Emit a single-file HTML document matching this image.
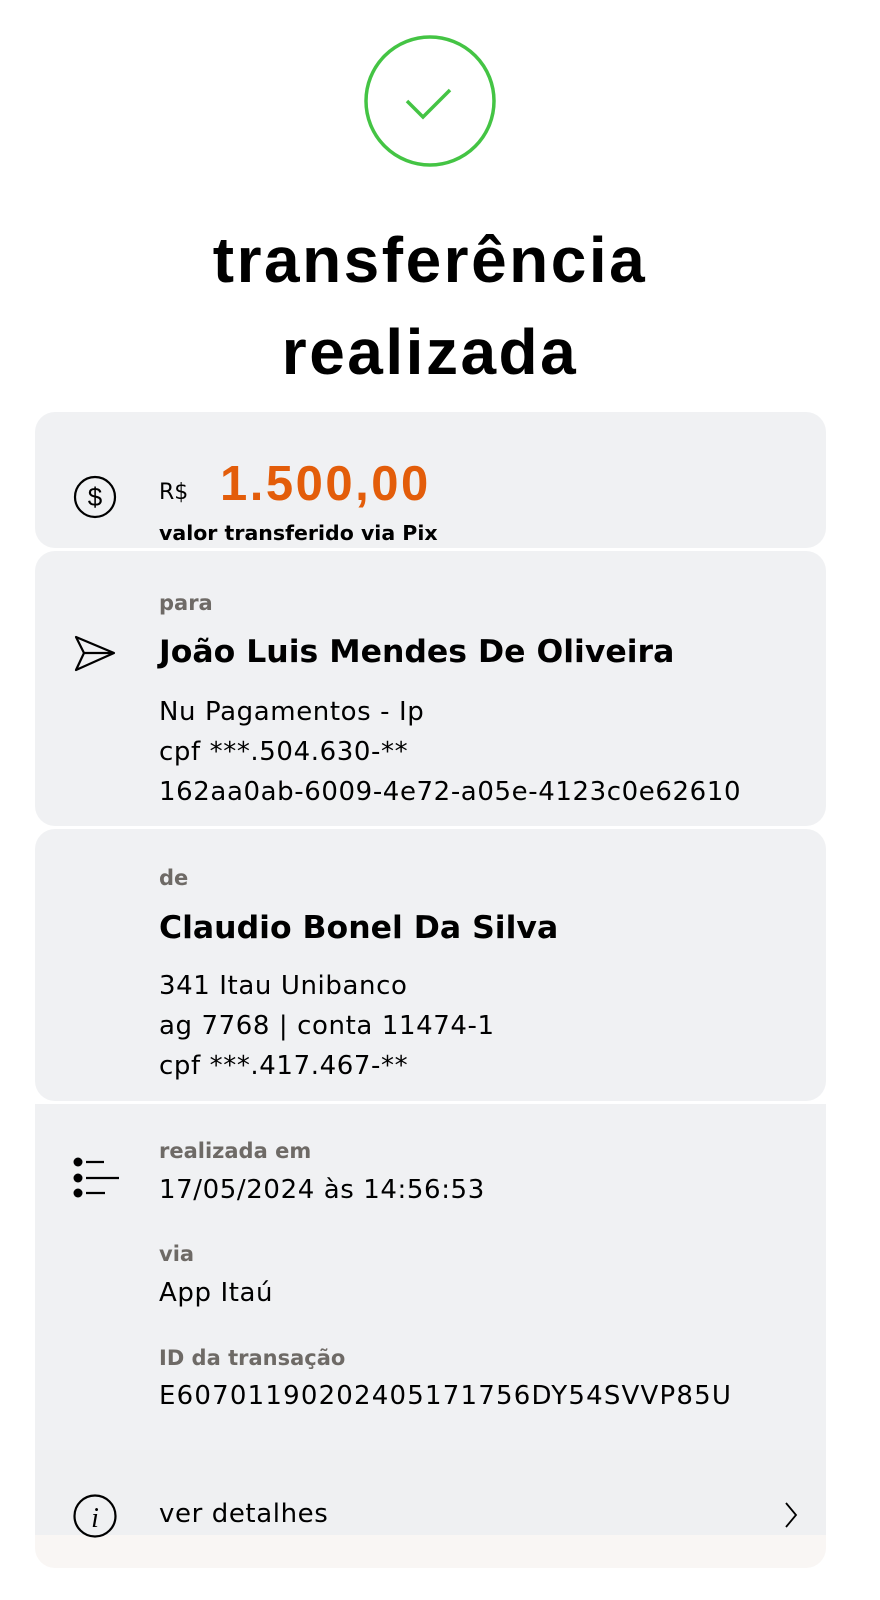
<!DOCTYPE html>
<html><head><meta charset="utf-8"><style>
body{margin:0;width:880px;height:1600px;background:#fff;font-family:"Liberation Sans",sans-serif;color:#000;position:relative;overflow:hidden}
.a{position:absolute;white-space:nowrap}
.card{position:absolute;left:35px;width:791px;background:#f0f1f3}
.lbl{color:#6e6a66;font-weight:bold;font-size:21px;font-family:"DejaVu Sans",sans-serif}
.t{font-size:26px;letter-spacing:0.6px;font-family:"DejaVu Sans",sans-serif}
.n{font-weight:bold;font-size:31.5px;letter-spacing:0px;font-family:"DejaVu Sans",sans-serif}
</style></head><body>
<svg class="a" style="left:360px;top:32px" width="140" height="140"><circle cx="70" cy="69" r="64" fill="none" stroke="#44c444" stroke-width="3.5"/><path d="M47 69 L63 85 L90 58" fill="none" stroke="#44c444" stroke-width="3.5"/></svg>
<div class="a" style="left:0;width:860px;text-align:center;top:214px;font-size:64px;font-weight:bold;line-height:92px;letter-spacing:2.5px">transferência<br>realizada</div>

<div class="card" style="top:412px;height:136px;border-radius:20px"></div>
<div class="card" style="top:551px;height:275px;border-radius:20px"></div>
<div class="card" style="top:829px;height:272px;border-radius:20px"></div>
<div class="card" style="top:1104px;height:346px"></div>
<div class="card" style="top:1450px;height:85px;background:#eff0f2"></div>
<div class="card" style="top:1535px;height:33px;background:#f9f6f4;border-radius:0 0 20px 20px"></div>

<svg class="a" style="left:72px;top:475px" width="46" height="46"><circle cx="23" cy="22" r="20" fill="none" stroke="#000" stroke-width="2.2"/><text x="23" y="31" font-size="26" text-anchor="middle" font-family="Liberation Sans">$</text></svg>
<div class="a" style="left:159px;top:480px;font-size:22px;font-family:'DejaVu Sans',sans-serif">R$</div>
<div class="a" style="left:220px;top:456px;font-size:49px;font-weight:bold;color:#e35d0a;letter-spacing:2.5px">1.500,00</div>
<div class="a" style="left:159px;top:521px;font-size:20.5px;font-weight:bold;font-family:'DejaVu Sans',sans-serif">valor transferido via Pix</div>

<svg class="a" style="left:72px;top:634px" width="48" height="40"><path d="M4 3 L42 19 L4 36 L12 19 Z M12 19 L42 19" fill="none" stroke="#000" stroke-width="2.2" stroke-linejoin="round"/></svg>
<div class="a lbl" style="left:159px;top:591px">para</div>
<div class="a n" style="left:159px;top:634px">João Luis Mendes De Oliveira</div>
<div class="a t" style="left:159px;top:692px;line-height:40px"> Nu Pagamentos - Ip<br>cpf ***.504.630-**<br>162aa0ab-6009-4e72-a05e-4123c0e62610</div>

<div class="a lbl" style="left:159px;top:866px">de</div>
<div class="a n" style="left:159px;top:910px">Claudio Bonel Da Silva</div>
<div class="a t" style="left:159px;top:966px;line-height:40px">341 Itau Unibanco<br>ag 7768 | conta 11474-1<br>cpf ***.417.467-**</div>

<svg class="a" style="left:72px;top:1155px" width="50" height="46"><circle cx="6" cy="7" r="4.5"/><circle cx="6" cy="23" r="4.5"/><circle cx="6" cy="38" r="4.5"/><path d="M14 7 H32 M14 23 H47 M14 38 H33" stroke="#000" stroke-width="2.2"/></svg>
<div class="a lbl" style="left:159px;top:1139px">realizada em</div>
<div class="a t" style="left:159px;top:1175px">17/05/2024 às 14:56:53</div>
<div class="a lbl" style="left:159px;top:1242px">via</div>
<div class="a t" style="left:159px;top:1278px">App Itaú</div>
<div class="a lbl" style="left:159px;top:1346px">ID da transação</div>
<div class="a t" style="left:159px;top:1381px;letter-spacing:1.2px">E60701190202405171756DY54SVVP85U</div>

<svg class="a" style="left:72px;top:1493px" width="48" height="48"><circle cx="23" cy="23" r="20.5" fill="none" stroke="#000" stroke-width="2.2"/><text x="23" y="34" font-size="28" font-style="italic" font-family="Liberation Serif" text-anchor="middle">i</text></svg>
<div class="a t" style="left:159px;top:1499px">ver detalhes</div>
<svg class="a" style="left:782px;top:1500px" width="20" height="30"><path d="M4 3 L14 15 L4 27" fill="none" stroke="#000" stroke-width="1.8"/></svg>
</body></html>
